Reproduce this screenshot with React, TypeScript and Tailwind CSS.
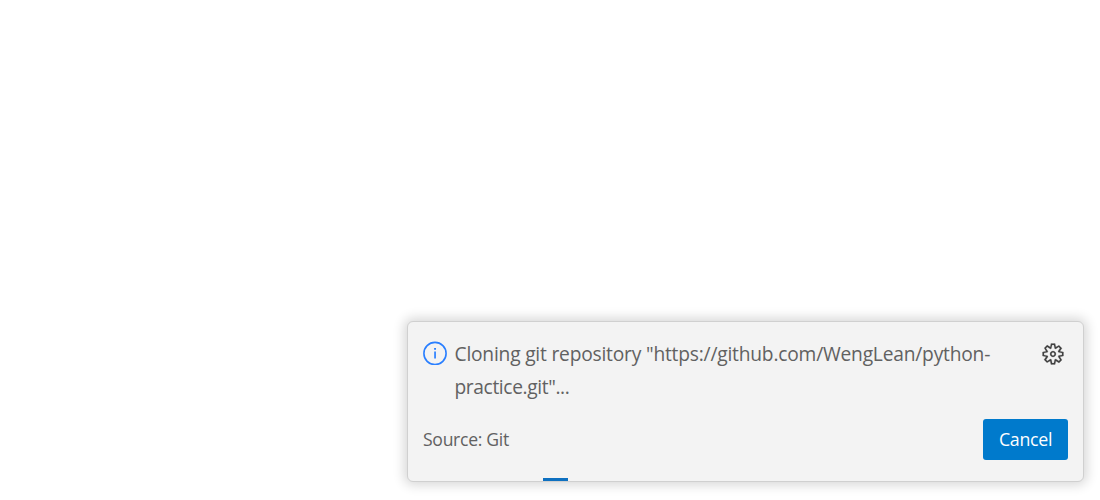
function InfoIcon() {
  return (
    <svg viewBox="0 0 24 24" className="mt-1 size-6 shrink-0 text-[#2a7fff]" fill="none" aria-hidden="true">
      <circle cx="12" cy="12.5" r="11.1" stroke="currentColor" strokeWidth="1.6" />
      <path d="M11.2 10.5h1.7v7h-1.7zM11.1 7h1.9v1.8h-1.9z" fill="currentColor" />
    </svg>
  );
}

function GearIcon() {
  return (
    <svg viewBox="0 0 16 16" className="size-6" fill="currentColor" stroke="currentColor" strokeWidth="0.12" aria-hidden="true">
      <path
        fillRule="evenodd"
        clipRule="evenodd"
        d="M9.1 4.4L8.6 2H7.4l-.5 2.4-.7.3-2-1.3-.9.8 1.3 2-.2.7-2.4.5v1.2l2.4.5.3.8-1.3 2 .8.8 2-1.3.8.3.4 2.3h1.2l.5-2.4.8-.3 2 1.3.8-.8-1.3-2 .3-.8 2.3-.4V7.4l-2.4-.5-.3-.8 1.3-2-.8-.8-2 1.3-.7-.2zM9.4 1l.5 2.4L12 2.1l2 2-1.4 2.1 2.4.4v2.8l-2.4.5L14 12l-2 2-2.1-1.4-.5 2.4H6.6l-.5-2.4L4 13.9l-2-2 1.4-2.1L1 9.4V6.6l2.4-.5L2.1 4l2-2 2.1 1.4.4-2.4h2.8zm.6 7c0 1.1-.9 2-2 2s-2-.9-2-2 .9-2 2-2 2 .9 2 2zM8 9c.6 0 1-.4 1-1s-.4-1-1-1-1 .4-1 1 .4 1 1 1z"
      />
    </svg>
  );
}

export default function App() {
  return (
    <main className="flex h-[500px] w-[1100px] items-end justify-end overflow-hidden bg-white pr-4 pb-[18px] font-['Open_Sans','Noto_Sans',sans-serif] text-[#616161]">
      <section className="flex h-[161px] w-[677px] flex-col overflow-hidden rounded-[6px] border border-[#d0d0d0] bg-[#f3f3f3] shadow-[0_0_12px_3px_rgba(0,0,0,0.16)]">
        <div className="flex items-start pt-[15px] pr-[18px] pl-[15px]">
          <InfoIcon />
          <p className="ml-[7.5px] grow text-[19.2px] leading-[33px] tracking-[-0.2px] whitespace-nowrap">
            <span className="block">Cloning git repository "https://github.com/WengLean/python-</span>
            <span className="block tracking-[-0.38px]">practice.git"...</span>
          </p>
          <button aria-label="Configure notification" className="mt-[5px] shrink-0 text-[#424242]">
            <GearIcon />
          </button>
        </div>
        <div className="mt-4 flex items-center justify-between pr-[15px] pl-[15px]">
          <span className="pb-[2px] text-[17.6px] leading-6 tracking-[-0.3px]">Source: Git</span>
          <button className="h-[41px] w-[85px] rounded-[3px] bg-[#007acc] pb-px text-[17.8px] leading-6 tracking-[-0.3px] text-white">Cancel</button>
        </div>
        <div className="mt-auto ml-[134.5px] h-[3px] w-[25.5px] shrink-0 bg-[#0e70c0]" />
      </section>
    </main>
  );
}
